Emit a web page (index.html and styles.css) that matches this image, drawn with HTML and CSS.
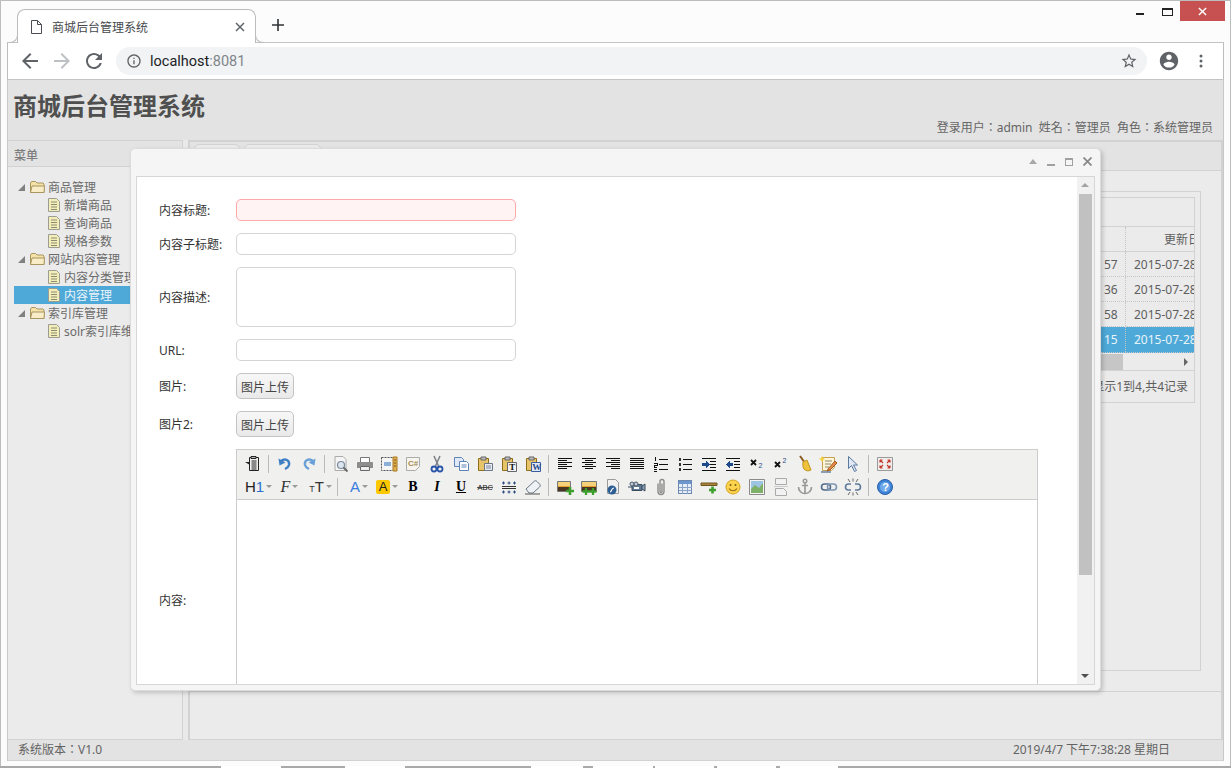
FILE: index.html
```html
<!DOCTYPE html>
<html lang="zh">
<head>
<meta charset="utf-8">
<title>商城后台管理系统</title>
<link rel="stylesheet" href="styles.css">
</head>
<body>
<svg class="defs" width="0" height="0" aria-hidden="true">
  <symbol id="folder" viewBox="0 0 16 16"><path d="M1.500 13.500V4l1-1.500h4L8 4h6l1 1v8.500z" fill="#f4e2a8" stroke="#a89560"/><path d="M1.500 13.500l1.500-6.500h12.500l-.5 6.500z" fill="#f8edc6" stroke="#a89560"/></symbol>
  <symbol id="file" viewBox="0 0 16 16"><path d="M2.500 1.500h8l3 3v10h-11z" fill="#f3eeb9" stroke="#9c9c90"/><path d="M5 5h6M5 7.500h6M5 10h6M5 12.500h6" stroke="#8c8c70"/></symbol>
</svg>
<div class="window">
  <div class="tabstrip">
    <div class="tab">
      <svg class="tab-file" viewBox="0 0 12 14" width="12" height="14"><path d="M1.500.5h6l4 4v9h-10zM7.500.5v4h4" fill="none" stroke="#4a4d51"/></svg>
      <span class="tab-title">商城后台管理系统</span>
      <svg class="tab-close" viewBox="0 0 10 10" width="10" height="10"><path d="M1 1l8 8M9 1l-8 8" stroke="#5f6368" stroke-width="1.500"/></svg>
    </div>
    <svg class="newtab" viewBox="0 0 12 12" width="12" height="12"><path d="M6 0v12M0 6h12" stroke="#2f3336" stroke-width="1.600"/></svg>
    <div class="winctl">
      <span class="win-min"></span>
      <span class="win-max"></span>
      <span class="win-close"><svg viewBox="0 0 10 10" width="9" height="9"><path d="M1 1l8 8M9 1l-8 8" stroke="#fff" stroke-width="1.600"/></svg></span>
    </div>
  </div>
  <div class="toolbar">
    <svg class="nav" viewBox="0 0 24 24"><path fill="#5f6368" d="M20 11H7.830l5.590-5.590L12 4l-8 8 8 8 1.410-1.410L7.830 13H20v-2z"/></svg>
    <svg class="nav" viewBox="0 0 24 24"><path fill="#bdc1c6" d="M12 4l-1.410 1.410L16.170 11H4v2h12.170l-5.580 5.590L12 20l8-8z"/></svg>
    <svg class="nav" viewBox="0 0 24 24"><path fill="#5f6368" d="M17.650 6.350C16.200 4.900 14.210 4 12 4c-4.420 0-7.990 3.580-7.990 8s3.570 8 7.990 8c3.730 0 6.840-2.550 7.730-6h-2.080c-.82 2.330-3.040 4-5.650 4-3.310 0-6-2.690-6-6s2.690-6 6-6c1.660 0 3.140.69 4.220 1.780L13 11h7V4l-2.350 2.350z"/></svg>
    <div class="omnibox">
      <svg class="omni-info" viewBox="0 0 24 24"><path fill="#5f6368" d="M11 7h2v2h-2zm0 4h2v6h-2zm1-9C6.480 2 2 6.480 2 12s4.480 10 10 10 10-4.480 10-10S17.520 2 12 2zm0 18c-4.410 0-8-3.590-8-8s3.590-8 8-8 8 3.590 8 8-3.590 8-8 8z"/></svg>
      <span class="omni-host">localhost<span class="omni-port">:8081</span></span>
      <svg class="omni-star" viewBox="0 0 24 24"><path fill="#5f6368" d="M22 9.240l-7.190-.62L12 2 9.190 8.630 2 9.240l5.460 4.730L5.820 21 12 17.270 18.180 21l-1.630-7.030L22 9.240zM12 15.400l-3.760 2.270 1-4.280-3.320-2.880 4.380-.38L12 6.100l1.710 4.040 4.380.38-3.320 2.880 1 4.280L12 15.400z"/></svg>
    </div>
    <svg class="profile" viewBox="0 0 24 24"><path fill="#5f6368" d="M12 2C6.480 2 2 6.480 2 12s4.480 10 10 10 10-4.480 10-10S17.520 2 12 2zm0 3c1.660 0 3 1.340 3 3s-1.340 3-3 3-3-1.340-3-3 1.340-3 3-3zm0 14.200c-2.500 0-4.710-1.280-6-3.220.03-1.990 4-3.080 6-3.080 1.990 0 5.970 1.090 6 3.080-1.290 1.940-3.500 3.220-6 3.220z"/></svg>
    <svg class="dots" viewBox="0 0 4 14" width="4" height="14"><circle cx="2" cy="2" r="1.500" fill="#5f6368"/><circle cx="2" cy="7" r="1.500" fill="#5f6368"/><circle cx="2" cy="12" r="1.500" fill="#5f6368"/></svg>
  </div>

  <div class="page">
    <header class="head">
      <h1 class="head-title">商城后台管理系统</h1>
      <div class="head-info" lang="zh-TW">登录用户：admin&nbsp;&nbsp;姓名：管理员&nbsp;&nbsp;角色：系统管理员</div>
    </header>
    <div class="main">
      <aside class="west">
        <div class="west-head">菜单</div>
        <ul class="tree">
          <li class="node"><i class="arrow"></i><svg class="ti"><use href="#folder"/></svg><span>商品管理</span></li>
          <li class="node leaf"><svg class="ti"><use href="#file"/></svg><span>新增商品</span></li>
          <li class="node leaf"><svg class="ti"><use href="#file"/></svg><span>查询商品</span></li>
          <li class="node leaf"><svg class="ti"><use href="#file"/></svg><span>规格参数</span></li>
          <li class="node"><i class="arrow"></i><svg class="ti"><use href="#folder"/></svg><span>网站内容管理</span></li>
          <li class="node leaf"><svg class="ti"><use href="#file"/></svg><span>内容分类管理</span></li>
          <li class="node leaf selected"><svg class="ti"><use href="#file"/></svg><span>内容管理</span></li>
          <li class="node"><i class="arrow"></i><svg class="ti"><use href="#folder"/></svg><span>索引库管理</span></li>
          <li class="node leaf"><svg class="ti"><use href="#file"/></svg><span>solr索引库维护</span></li>
        </ul>
      </aside>
      <section class="center">
        <div class="tabs-panel">
          <div class="ctabs">
            <span class="ctab ctab-a">首页</span>
            <span class="ctab ctab-b">内容管理</span>
          </div>
          <div class="ccontent">
            <div class="outerbox">
              <div class="grid">
                <div class="grid-tools"></div>
                <div class="grow ghead"><span class="gspacer"></span><span class="gcell g1"></span><span class="gcell g2 g2h">更新日期</span></div>
                <div class="grow"><span class="gspacer"></span><span class="gcell g1">57</span><span class="gcell g2">2015-07-28</span></div>
                <div class="grow"><span class="gspacer"></span><span class="gcell g1">36</span><span class="gcell g2">2015-07-28</span></div>
                <div class="grow"><span class="gspacer"></span><span class="gcell g1">58</span><span class="gcell g2">2015-07-28</span></div>
                <div class="grow gsel"><span class="gspacer"></span><span class="gcell g1">15</span><span class="gcell g2">2015-07-28</span></div>
                <div class="ghbar"><span class="ghthumb"></span><i class="gharrow"></i></div>
                <div class="gpager">显示1到4,共4记录</div>
              </div>
            </div>
          </div>
        </div>
      </section>
    </div>
    <footer class="status" lang="zh-TW">
      <span>系统版本：V1.0</span>
      <span>2019/4/7 下午7:38:28 星期日</span>
    </footer>
  </div>
</div>
<div class="taskstrip">
  <span class="tb tb1"></span><span class="tb tb2"></span><span class="tb tb3"></span><span class="tb tb4"></span><span class="tb tb5"></span><span class="tb tb6"></span><span class="tb tb7"></span>
</div>

<div class="dialog">
  <div class="dlg-head">
    <i class="dt-up"></i><i class="dt-min"></i><i class="dt-max"></i>
    <svg class="dt-close" viewBox="0 0 9 9" width="9" height="9"><path d="M.5.5l8 8M8.500.5l-8 8" stroke="#8a8a8a" stroke-width="1.800"/></svg>
  </div>
  <div class="dlg-body">
    <form class="form">
      <label class="lbl">内容标题:</label><input class="inp inp-invalid" type="text">
      <label class="lbl">内容子标题:</label><input class="inp" type="text">
      <label class="lbl">内容描述:</label><textarea class="inp txt"></textarea>
      <label class="lbl">URL:</label><input class="inp" type="text">
      <label class="lbl">图片:</label><div><button class="up" type="button">图片上传</button></div>
      <label class="lbl">图片2:</label><div><button class="up" type="button">图片上传</button></div>
      <label class="lbl">内容:</label>
      <div class="editor">
        <div class="ed-tools">
          <div class="ed-row">
            <span class="b"><svg viewBox="0 0 20 20"><path d="M6.500 3.500h9v13h-9z" fill="#eee" stroke="#222"/><path d="M8 2.500h5v2H8z" fill="#bbb" stroke="#222"/><path d="M8.500 7h5M8.500 9h5M8.500 11h5M8.500 13h5M8.500 15h5" stroke="#222"/><path d="M2 8h5v3z" fill="#222"/></svg></span>
            <i class="sep"></i>
            <span class="b"><svg viewBox="0 0 20 20"><path d="M6 7c4-3 9-1 8 4-.5 2-2 3-4 4" fill="none" stroke="#3f7fc4" stroke-width="2.400"/><path d="M3.500 4.500l1 7 6-3z" fill="#3f7fc4"/></svg></span>
            <span class="b"><svg viewBox="0 0 20 20"><path d="M14 7c-4-3-9-1-8 4 .5 2 2 3 4 4" fill="none" stroke="#6aa0d8" stroke-width="2.400"/><path d="M16.500 4.500l-1 7-6-3z" fill="#6aa0d8"/></svg></span>
            <i class="sep"></i>
            <span class="b"><svg viewBox="0 0 20 20"><path d="M4 2.500h8l3 3v11H4z" fill="#f5f5f5" stroke="#aaa"/><circle cx="10" cy="11" r="3.500" fill="#dde6ef" stroke="#7a8a9c" stroke-width="1.200"/><path d="M12.500 13.500l4 4" stroke="#666" stroke-width="1.800"/></svg></span>
            <span class="b"><svg viewBox="0 0 20 20"><path d="M5.500 3.500h9v5h-9z" fill="#fff" stroke="#777"/><path d="M3 8h14a1 1 0 0 1 1 1v5h-3v-1.500H5V14H2V9a1 1 0 0 1 1-1z" fill="#8d8d8d"/><path d="M5.500 12.500h9v4h-9z" fill="#eee" stroke="#666"/></svg></span>
            <span class="b"><svg viewBox="0 0 20 20"><path d="M2.500 3.500h12v13h-12z" fill="#f5f5f5" stroke="#555" stroke-dasharray="2 1"/><path d="M14 3h4v14h-4z" fill="#e2b050" stroke="#a87820"/><path d="M5 8h7v4H5z" fill="#8ab0d8"/><path d="M15 6h2M15 9h2M15 12h2" stroke="#7a5510"/></svg></span>
            <span class="b"><svg viewBox="0 0 20 20"><path d="M3.500 3.500h13v9l-4 4h-9z" fill="#f6f4ec" stroke="#aaa"/><text class="svt c-s" x="5" y="12">C#</text></svg></span>
            <span class="b"><svg viewBox="0 0 20 20"><path d="M7 2l4.500 10M13 2L8.500 12" stroke="#7b7f86" stroke-width="1.500"/><circle cx="7" cy="15" r="2.500" fill="none" stroke="#2a55a8" stroke-width="1.800"/><circle cx="13" cy="15" r="2.500" fill="none" stroke="#2a55a8" stroke-width="1.800"/></svg></span>
            <span class="b"><svg viewBox="0 0 20 20"><path d="M3.500 3.500h7l2 2v7h-9z" fill="#dfe9f7" stroke="#5d83b8"/><path d="M8.500 7.500h7l2 2v7h-9z" fill="#fff" stroke="#5d83b8"/><path d="M10.500 11h5M10.500 13h5" stroke="#5d83b8"/></svg></span>
            <span class="b"><svg viewBox="0 0 20 20"><path d="M3.500 4.500h10v12h-10z" fill="#e8c468" stroke="#8e6c1c"/><path d="M6 3h5v3H6z" fill="#bbb" stroke="#666"/><path d="M9.500 9.500h8v7h-8z" fill="#e8ecf2" stroke="#6a7788"/><path d="M11 12h5M11 14h5" stroke="#7a8798"/></svg></span>
            <span class="b"><svg viewBox="0 0 20 20"><path d="M3.500 4.500h10v12h-10z" fill="#e8c468" stroke="#8e6c1c"/><path d="M6 3h5v3H6z" fill="#bbb" stroke="#666"/><path d="M8.500 8.500h9v9h-9z" fill="#f3f3f3" stroke="#666"/><text class="svt t-s" x="10.300" y="16">T</text></svg></span>
            <span class="b"><svg viewBox="0 0 20 20"><path d="M3.500 4.500h10v12h-10z" fill="#e8c468" stroke="#8e6c1c"/><path d="M6 3h5v3H6z" fill="#bbb" stroke="#666"/><path d="M8.500 8.500h9v9h-9z" fill="#dfe8f6" stroke="#3b5da0"/><text class="svt w-s" x="9.300" y="16">W</text></svg></span>
            <i class="sep"></i>
            <span class="b"><svg class="crisp" viewBox="0 0 20 20"><path d="M3 4.500h14M3 6.500h9M3 8.500h14M3 10.500h9M3 12.500h14M3 14.500h9" stroke="#111"/></svg></span>
            <span class="b"><svg class="crisp" viewBox="0 0 20 20"><path d="M3 4.500h14M6 6.500h8M3 8.500h14M6 10.500h8M3 12.500h14M6 14.500h8" stroke="#111"/></svg></span>
            <span class="b"><svg class="crisp" viewBox="0 0 20 20"><path d="M3 4.500h14M8 6.500h9M3 8.500h14M8 10.500h9M3 12.500h14M8 14.500h9" stroke="#111"/></svg></span>
            <span class="b"><svg class="crisp" viewBox="0 0 20 20"><path d="M3 4.500h14M3 6.500h14M3 8.500h14M3 10.500h14M3 12.500h14M3 14.500h14" stroke="#111"/></svg></span>
            <span class="b"><svg class="crisp" viewBox="0 0 20 20"><path d="M8 5.500h9M8 10.500h9M8 15.500h9M4.500 3v4M3 9.500h3v2H3v2h3M3 15.500h3M3 17.500h3" fill="none" stroke="#111"/></svg></span>
            <span class="b"><svg class="crisp" viewBox="0 0 20 20"><path d="M8 5.500h9M8 10.500h9M8 15.500h9" stroke="#111"/><path d="M4 4h2v3H4zM4 9h2v3H4zM4 14h2v3H4z" fill="#333"/></svg></span>
            <span class="b"><svg class="crisp" viewBox="0 0 20 20"><path d="M3 4.500h14M11 7.500h6M11 10.500h6M11 13.500h6M3 16.500h14" stroke="#111"/><path d="M3 9h4V6.500l3.500 4-3.500 4V12H3z" fill="#1c4a8c"/></svg></span>
            <span class="b"><svg class="crisp" viewBox="0 0 20 20"><path d="M3 4.500h14M11 7.500h6M11 10.500h6M11 13.500h6M3 16.500h14" stroke="#111"/><path d="M10 9H6.500V6.500l-3.500 4 3.500 4V12H10z" fill="#1c4a8c"/></svg></span>
            <span class="b"><svg viewBox="0 0 20 20"><path d="M4 6l5 5M9 6l-5 5" stroke="#111" stroke-width="1.800"/><text class="svt sub" x="11.500" y="14">2</text></svg></span>
            <span class="b"><svg viewBox="0 0 20 20"><path d="M4 8l5 5M9 8l-5 5" stroke="#111" stroke-width="1.800"/><text class="svt sub" x="11.500" y="9">2</text></svg></span>
            <span class="b"><svg viewBox="0 0 20 20"><path d="M5 2l5 7" stroke="#8a5a20" stroke-width="2"/><path d="M8 8l4-2 4 10c-3 1.500-5 1-7-1-1-1.500-1.500-4-1-7z" fill="#eec23a" stroke="#c2951a"/></svg></span>
            <span class="b"><svg viewBox="0 0 20 20"><path d="M3.500 3.500h12v10l-3 3h-9z" fill="#fdf5d8" stroke="#c4a050"/><path d="M6 7h7M6 10h6M6 13h4" stroke="#8a8a70"/><path d="M9 15l7-8 2 2-7 7-3 1z" fill="#e58a4a" stroke="#a05a20"/><path d="M2 18h10" stroke="#234a80"/><path d="M3 2l1 2 2 1-2 1-1 2-1-2-2-1 2-1z" fill="#f3d23a"/></svg></span>
            <span class="b"><svg viewBox="0 0 20 20"><path d="M5.500 2.500v12l3-3 3 6 2-1-3-5.500h4z" fill="#dfe8f4" stroke="#5878a0"/></svg></span>
            <i class="sep"></i>
            <span class="b"><svg viewBox="0 0 20 20"><path d="M2.500 3.500h15v13h-15z" fill="#f2eded" stroke="#999"/><path d="M5 6l3 3M5 6h2.500M5 6v2.500M15 6l-3 3M15 6h-2.500M15 6v2.500M5 14l3-3M5 14h2.500M5 14v-2.500M15 14l-3-3M15 14h-2.500M15 14v-2.500" stroke="#c0392b" stroke-width="1.200" fill="none"/></svg></span>
          </div>
          <div class="ed-row">
            <span class="b combo"><span class="h1">H<em>1</em></span><i class="caret"></i></span>
            <span class="b combo"><span class="ft">F</span><i class="caret"></i></span>
            <span class="b combo"><span class="tt"><small>T</small>T</span><i class="caret"></i></span>
            <i class="sep"></i>
            <span class="b combo c30"><span class="fa">A</span><i class="caret"></i></span>
            <span class="b combo c29"><span class="fh">A</span><i class="caret"></i></span>
            <span class="b"><b class="fmt fb">B</b></span>
            <span class="b"><b class="fmt fi">I</b></span>
            <span class="b"><b class="fmt fu">U</b></span>
            <span class="b"><svg viewBox="0 0 20 20"><text class="svt abc" x="2.500" y="13">ABC</text><path d="M2 10.500h16" stroke="#333" stroke-width=".8"/></svg></span>
            <span class="b"><svg viewBox="0 0 20 20"><path d="M3 9.500h14M3 11.500h14" stroke="#333"/><path d="M3 6h3M4.500 4.500v3M8.500 6h3M10 4.500v3M14 6h3M15.500 4.500v3M3 15h3M4.500 13.500v3M8.500 15h3M10 13.500v3M14 15h3M15.500 13.500v3" stroke="#2a4a80"/></svg></span>
            <span class="b"><svg viewBox="0 0 20 20"><path d="M3 12L11 4.500c1-1 2-1 3 0l2.500 2.500c1 1 1 2 0 3L10 16H6z" fill="#eef2f6" stroke="#6a7684"/><path d="M2 17h15" stroke="#555"/></svg></span>
            <i class="sep"></i>
            <span class="b"><svg viewBox="0 0 20 20"><path d="M2.500 4.500h13v10h-13z" fill="#e8a030" stroke="#777"/><path d="M3 5h12v4H3z" fill="#f4d17a"/><path d="M3 10h12v4H3z" fill="#4a3520"/><path d="M15 10v8M11 14h8" stroke="#3da02c" stroke-width="2.600"/></svg></span>
            <span class="b"><svg viewBox="0 0 20 20"><path d="M2.500 4.500h15v10h-15z" fill="#e8a030" stroke="#777"/><path d="M3 5h14v4H3z" fill="#f4d17a"/><path d="M3 10h14v4H3z" fill="#4a3520"/><path d="M7 11v7M3.500 14.500h7M14 11v7M10.500 14.500h7" stroke="#3da02c" stroke-width="2.300"/></svg></span>
            <span class="b"><svg viewBox="0 0 20 20"><path d="M4.500 2.500h8l3 3v11h-11z" fill="#f1f1f1" stroke="#9a9a9a"/><circle cx="9" cy="13" r="4.500" fill="#2e5f94"/><path d="M7 15c2 0 1-4 4-4" stroke="#fff" stroke-width="1.200" fill="none"/></svg></span>
            <span class="b"><svg viewBox="0 0 20 20"><path d="M5 7.500h10v6H5z" fill="#5f7a94" stroke="#3c4d60"/><circle cx="5" cy="7" r="2" fill="#c4ced8" stroke="#4a5a6a"/><circle cx="9" cy="7" r="2" fill="#c4ced8" stroke="#4a5a6a"/><path d="M15 9l3-2v7l-3-2z" fill="#8aa0b4" stroke="#3c4d60"/><path d="M1 10h4" stroke="#3c4d60"/><path d="M7 10h5v2H7z" fill="#fff"/></svg></span>
            <span class="b"><svg viewBox="0 0 20 20"><path d="M7 6.500v8a3 3 0 0 0 6 0v-10a2 2 0 0 0-4 0v10a1 1 0 0 0 2 0v-8" fill="none" stroke="#8b8b8b" stroke-width="1.400"/></svg></span>
            <span class="b"><svg class="crisp" viewBox="0 0 20 20"><path d="M3.500 3.500h13v13h-13z" fill="#e6edf7" stroke="#6a88b0"/><path d="M4 4h12v3H4z" fill="#6d96cf"/><path d="M3.500 10.500h13M3.500 13.500h13M7.500 7v10M12.500 7v10" stroke="#8aa4c8"/></svg></span>
            <span class="b"><svg viewBox="0 0 20 20"><path d="M2 6h16v2.500H2z" fill="#a8843a" stroke="#6e5520"/><path d="M13.500 9.500v7M10 13h7" stroke="#3da02c" stroke-width="2.600"/></svg></span>
            <span class="b"><svg viewBox="0 0 20 20"><circle cx="10" cy="10" r="7" fill="#fbd34c" stroke="#d8a520"/><circle cx="7.500" cy="8" r="1" fill="#7a5a10"/><circle cx="12.500" cy="8" r="1" fill="#7a5a10"/><path d="M6 11.500c2 3 6 3 8 0" fill="none" stroke="#9a6a10" stroke-width="1.200"/></svg></span>
            <span class="b"><svg viewBox="0 0 20 20"><path d="M2.500 2.500h15v15h-15z" fill="#f4f4f4" stroke="#8a8a8a"/><path d="M4 4h12v12H4z" fill="#9ec4e4"/><path d="M4 16v-4l4-4 4 3 4-5v10z" fill="#7eb068"/></svg></span>
            <span class="b"><svg viewBox="0 0 20 20"><path d="M4.500 1.500h11v6h-11zM4.500 11.500h8l3 3v4h-11z" fill="#f2f2f2" stroke="#aaa"/><path d="M3 9.500h14" stroke="#ccc"/></svg></span>
            <span class="b"><svg viewBox="0 0 20 20"><circle cx="10" cy="4" r="1.800" fill="none" stroke="#9a9a9a" stroke-width="1.400"/><path d="M10 6v10M7 8.500h6M3.500 10c0 4 3 6.500 6.500 6.500s6.500-2.500 6.500-6.500" fill="none" stroke="#9a9a9a" stroke-width="1.700"/></svg></span>
            <span class="b"><svg viewBox="0 0 20 20"><rect x="2.500" y="7" width="9" height="6" rx="3" fill="none" stroke="#526b8c" stroke-width="1.600"/><rect x="8.500" y="7" width="9" height="6" rx="3" fill="none" stroke="#7e95b0" stroke-width="1.600"/></svg></span>
            <span class="b"><svg viewBox="0 0 20 20"><path d="M8 7H5.500a3 3 0 0 0 0 6H8M12 7h2.500a3 3 0 0 1 0 6H12" fill="none" stroke="#607a9a" stroke-width="1.600"/><path d="M5 2l2 3M10 1.500v3M15 2l-2 3M5 18l2-3M10 18.500v-3M15 18l-2-3" stroke="#666"/></svg></span>
            <i class="sep"></i>
            <span class="b"><svg viewBox="0 0 20 20"><circle cx="10" cy="10" r="7.500" fill="#3f83d6" stroke="#2a5ea8"/><circle cx="10" cy="10" r="5" fill="#6fa9ea"/><text class="svt q" x="7.300" y="14">?</text></svg></span>
          </div>
        </div>
      </div>
    </form>
    <div class="vbar">
      <i class="vb-up"></i>
      <span class="vb-thumb"></span>
      <i class="vb-down"></i>
    </div>
  </div>
</div>
</body>
</html>
```
FILE: styles.css
```css
* { box-sizing: border-box; }
html, body { margin: 0; padding: 0; }
body {
  position: relative;
  width: 1231px;
  height: 768px;
  overflow: hidden;
  background: #a9a9a9;
  font-family: "Noto Sans", "Noto Sans CJK SC", sans-serif;
  font-size: 12px;
}
.defs { position: absolute; }

/* browser window */
.window {
  height: 766px;
  display: flex;
  flex-direction: column;
  padding: 0 6px 5px;
  background: #fcfcfc;
  border: 1px solid #bdbdbd;
  border-bottom: 0;
}
.tabstrip {
  height: 41px;
  flex: none;
  display: flex;
  align-items: flex-end;
  position: relative;
  padding-left: 10px;
}
.tab {
  position: relative;
  width: 239px;
  height: 34px;
  margin-bottom: -1px;
  z-index: 2;
  display: flex;
  align-items: center;
  padding: 0 10px 0 12px;
  background: #fff;
  border: 1px solid #bcbcbc;
  border-bottom: 0;
  border-radius: 8px 8px 0 0;
}
.tab::before, .tab::after {
  content: "";
  position: absolute;
  bottom: 0;
  width: 8px;
  height: 8px;
  border-bottom: 1px solid #bcbcbc;
}
.tab::before { left: -9px; border-right: 1px solid #bcbcbc; border-bottom-right-radius: 8px; }
.tab::after { right: -9px; border-left: 1px solid #bcbcbc; border-bottom-left-radius: 8px; }
.tab-title {
  margin-left: 10px;
  flex: 1;
  color: #45484c;
  font-size: 12px;
}
.newtab { margin: 0 0 11px 16px; }
.winctl {
  position: absolute;
  right: -1px;
  top: 0;
  display: flex;
  align-items: flex-start;
}
.win-min { width: 8px; height: 2px; margin: 12px 18px 0 0; background: #222; }
.win-max { width: 11px; height: 8px; margin: 7px 7px 0 0; border: 1px solid #222; border-top-width: 2px; }
.win-close {
  width: 45px;
  height: 20px;
  background: #c75050;
  display: flex;
  align-items: center;
  justify-content: center;
}
.toolbar {
  height: 38px;
  flex: none;
  display: flex;
  align-items: center;
  padding-left: 10px;
  background: #fff;
  border: 1px solid #bdbdbd;
  border-top-color: #c4c4c4;
  border-bottom-color: #c4c4c4;
}
.nav { width: 24px; height: 24px; margin-right: 8px; flex: none; }
.omnibox {
  width: 1031px;
  height: 28px;
  margin-left: 2px;
  display: flex;
  align-items: center;
  padding: 0 9px 0 10px;
  background: #f1f3f4;
  border-radius: 14px;
}
.omni-info { width: 16px; height: 16px; flex: none; }
.omni-host {
  margin-left: 8px;
  flex: 1;
  font: 14.5px Roboto, sans-serif;
  color: #202124;
}
.omni-port { color: #80868b; }
.omni-star { width: 18px; height: 18px; flex: none; }
.profile { width: 22px; height: 22px; margin-left: 11px; flex: none; }
.dots { margin-left: 19px; flex: none; }

/* application */
.page {
  flex: 1;
  min-height: 0;
  display: flex;
  flex-direction: column;
  border-left: 1px solid #c8c8c8;
  border-right: 1px solid #c8c8c8;
  background: #e9e9e9;
  color: #5e5e5e;
}
.head {
  height: 60px;
  flex: none;
  display: flex;
  justify-content: space-between;
  background: #e3e3e3;
}
.head-title {
  margin: 7px 0 0 5px;
  font: bold 24px/36px "Noto Sans CJK SC", sans-serif;
  color: #4f4f4f;
}
.head-info {
  align-self: flex-end;
  padding: 0 10px 3px 0;
  line-height: 18px;
  color: #666;
  font-family: "Noto Sans", "Noto Sans CJK TC", sans-serif;
}
.main { flex: 1; min-height: 0; display: flex; gap: 5px; }
.west {
  width: 175px;
  flex: none;
  display: flex;
  flex-direction: column;
  background: #ebebeb;
  border: 1px solid #d2d2d2;
  border-left: 0;
}
.west-head {
  height: 26px;
  padding-left: 6px;
  line-height: 29px;
  background: #e3e3e3;
  border-bottom: 1px solid #d2d2d2;
  color: #7b7b7b;
  font-weight: 500;
}
.tree { list-style: none; margin: 11px 0 0 6px; padding: 0; }
.node {
  height: 18px;
  display: flex;
  align-items: center;
  padding-left: 4px;
  white-space: nowrap;
  overflow: hidden;
  color: #6a6a6a;
}
.node > span { margin-left: 3px; }
.leaf { padding-left: 32px; }
.leaf > span { margin-left: 2px; }
.selected { background: #4fa9d8; color: #eaf4fa; }
.arrow {
  width: 0;
  height: 0;
  margin-right: 4px;
  border-left: 7px solid transparent;
  border-bottom: 7px solid #808080;
}
.ti { width: 16px; height: 16px; flex: none; }
.center {
  flex: 1;
  min-width: 0;
  background: #ebebeb;
  border: 2px solid #d2d2d2;
  border-width: 2px 2px 1px 2px;
}
.tabs-panel { height: 550px; display: flex; flex-direction: column; border-bottom: 1px solid #d2d2d2; }
.ctabs {
  height: 29px;
  flex: none;
  display: flex;
  gap: 4px;
  padding: 2px 0 0 4px;
  background: #e3e3e3;
  border-bottom: 1px solid #d2d2d2;
}
.ctab {
  height: 27px;
  text-align: center;
  line-height: 26px;
  background: #ebebeb;
  border: 1px solid #d2d2d2;
  border-radius: 5px 5px 0 0;
}
.ctab-a { width: 46px; }
.ctab-b { width: 77px; }
.ccontent { flex: 1; min-height: 0; padding: 20px 20px 20px 5px; }
.outerbox { height: 100%; padding: 5px 5px 0 5px; border: 1px solid #d2d2d2; }
.grid {
  height: 206px;
  display: flex;
  flex-direction: column;
  border: 1px solid #d2d2d2;
  overflow: hidden;
}
.grid-tools { height: 29px; flex: none; border-bottom: 1px solid #d2d2d2; }
.grow {
  height: 25px;
  flex: none;
  display: flex;
  align-items: center;
  border-bottom: 1px dotted #c6c6c6;
  white-space: nowrap;
}
.ghead { height: 25px; border-bottom: 1px solid #d2d2d2; }
.gspacer { flex: 1; }
.gcell { height: 100%; line-height: 25px; font-size: 12px; }
.g1 { width: 31px; padding-left: 10px; }
.g2 {
  width: 69px;
  padding-left: 8px;
  overflow: hidden;
  border-left: 1px dotted #c6c6c6;
}
.g2h { padding-left: 38px; }
.gsel { background: #4fa9d8; color: #e8f4fa; height: 26px; }
.ghbar {
  height: 18px;
  flex: none;
  position: relative;
  border-bottom: 1px solid #d2d2d2;
}
.ghthumb { display: block; width: 1000px; height: 16px; margin-top: 1px; background: #c6c6c6; position: absolute; right: 71px; }
.gharrow {
  position: absolute;
  right: 6px;
  top: 5px;
  border-left: 4px solid #666;
  border-top: 4px solid transparent;
  border-bottom: 4px solid transparent;
}
.gpager { flex: 1; text-align: right; padding-right: 6px; line-height: 32px; }
.status {
  height: 21px;
  flex: none;
  display: flex;
  justify-content: space-between;
  padding: 0 53px 0 10px;
  line-height: 20px;
  background: #e3e3e3;
  border-bottom: 1px solid #d2d2d2;
  color: #636363;
  font-family: "Noto Sans", "Noto Sans CJK TC", sans-serif;
}
.taskstrip {
  position: absolute;
  left: 0;
  right: 0;
  bottom: 0;
  height: 2px;
}
.tb { position: absolute; top: 0; height: 2px; background: #fff; }
.tb1 { left: 221px; width: 60px; }
.tb2 { left: 345px; width: 60px; }
.tb3 { left: 531px; width: 52px; }
.tb4 { left: 593px; width: 60px; }
.tb5 { left: 655px; width: 59px; }
.tb6 { left: 717px; width: 59px; }
.tb7 { left: 780px; width: 58px; }

/* dialog */
.dialog {
  position: absolute;
  left: 130px;
  top: 148px;
  width: 971px;
  height: 543px;
  display: flex;
  flex-direction: column;
  padding: 0 5px 5px 5px;
  background: #f5f5f5;
  border: 1px solid #dcdcdc;
  border-radius: 5px;
  box-shadow: 2px 2px 4px rgba(0,0,0,.18);
}
.dlg-head {
  height: 27px;
  flex: none;
  display: flex;
  align-items: center;
  justify-content: flex-end;
  padding: 0 3px 2px 0;
}
.dt-up { border: 4px solid transparent; border-top: 0; border-bottom: 5px solid #a8a8a8; margin-right: 10px; }
.dt-min { width: 8px; height: 2px; background: #a0a0a0; margin: 6px 10px 0 0; }
.dt-max { width: 8px; height: 8px; border: 1px solid #a0a0a0; border-top-width: 2px; margin-right: 10px; }
.dlg-body {
  flex: 1;
  min-height: 0;
  display: flex;
  background: #fff;
  border: 1px solid #d6d6d6;
  overflow: hidden;
}
.form {
  flex: 1;
  min-width: 0;
  height: 574px;
  display: grid;
  grid-template-columns: 77px 802px;
  grid-auto-rows: min-content;
  row-gap: 12px;
  align-items: center;
  padding: 22px 0 0 22px;
  color: #333;
}
.lbl { padding-top: 2px; line-height: 16px; }
.inp {
  display: block;
  width: 280px;
  height: 22px;
  margin: 0;
  padding: 0 4px;
  background: #fff;
  border: 1px solid #d4d4d4;
  border-radius: 5px;
  outline: 0;
  resize: none;
}
.inp-invalid { background: #fff3f3; border-color: #ffa8a8; }
.txt { height: 60px; }
.up {
  display: block;
  width: 58px;
  height: 26px;
  margin: 0;
  padding: 0;
  background: linear-gradient(#f7f7f7, #e9e9e9);
  border: 1px solid #c4c4c4;
  border-radius: 5px;
  color: #444;
  font: 12px "Noto Sans CJK SC", sans-serif;
}
.editor {
  width: 802px;
  height: 302px;
  background: #fff;
  border: 1px solid #ccc;
}
.ed-tools {
  height: 50px;
  padding: 2px 0 0 4px;
  background: #f0f0ee;
  border-bottom: 1px solid #ccc;
}
.ed-row { height: 23px; display: flex; align-items: center; }
.b {
  width: 24px;
  height: 23px;
  flex: none;
  display: flex;
  align-items: center;
  justify-content: center;
}
.b > svg { width: 20px; height: 20px; display: block; }
.crisp { shape-rendering: crispEdges; }
.sep { width: 8px; height: 18px; flex: none; position: relative; }
.sep::after { content: ""; position: absolute; left: 3px; top: 0; width: 1px; height: 18px; background: #bdbdb8; }
.combo { width: 31px; gap: 2px; padding-left: 4px; }
.c30 { width: 30px; }
.c29 { width: 29px; padding-left: 1px; }
.caret { border: 3px solid transparent; border-top: 3px solid #999; border-bottom: 0; flex: none; }
.h1 { font: 15px "Liberation Sans", sans-serif; color: #222; }
.h1 em { font-style: normal; color: #2a6fd0; }
.ft { font: italic 16px "Liberation Serif", serif; color: #333; }
.tt { font: 15px "Liberation Sans", sans-serif; color: #333; }
.tt small { font-size: 9px; }
.fa { font: 15px "Liberation Sans", sans-serif; color: #3a7de0; }
.fh { width: 14px; height: 14px; background: #fdc800; border-radius: 2px; text-align: center; font: 13px/14px "Liberation Sans", sans-serif; color: #222; }
.fmt { font: bold 14px "Liberation Serif", serif; color: #000; }
.fi { font-style: italic; }
.fu { text-decoration: underline; }
.svt { font-family: "Liberation Sans", sans-serif; }
.c-s { font-size: 8px; font-weight: bold; fill: #a38a55; }
.t-s { font-size: 9px; font-weight: bold; font-family: "Liberation Serif", serif; fill: #111; }
.w-s { font-size: 9px; font-weight: bold; font-family: "Liberation Serif", serif; fill: #2a4a8c; }
.sub { font-size: 7px; fill: #2a4a8c; }
.abc { font-size: 7.500px; font-family: "Liberation Sans", sans-serif; fill: #111; }
.q { font-size: 11px; font-weight: bold; fill: #fff; }
.vbar {
  width: 17px;
  flex: none;
  position: relative;
  background: #f1f1f1;
}
.vb-up { position: absolute; left: 4px; top: 6px; border: 4px solid transparent; border-top: 0; border-bottom: 4px solid #a3a3a3; }
.vb-thumb { position: absolute; left: 2px; right: 2px; top: 17px; height: 381px; background: #c1c1c1; }
.vb-down { position: absolute; left: 4px; bottom: 6px; border: 4px solid transparent; border-bottom: 0; border-top: 4px solid #505050; }
```
